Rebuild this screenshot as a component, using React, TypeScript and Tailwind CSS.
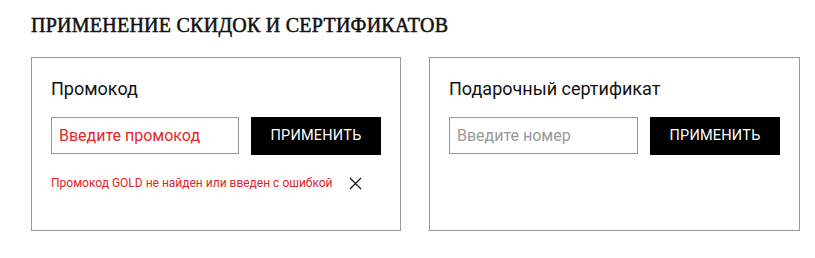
import React from "react";

export default function App() {
  return (
    <div className="w-[815px] h-[258px] bg-white pl-[31px] pt-[12px]" style={{ fontFamily: "Roboto, 'Liberation Sans', sans-serif" }}>
      <h1 className="text-[20px] leading-[26px] font-normal tracking-[0.25px] text-[#111] [-webkit-text-stroke:0.5px_#111]" style={{ fontFamily: "'Liberation Serif', 'DejaVu Serif', serif" }}>
        ПРИМЕНЕНИЕ СКИДОК И СЕРТИФИКАТОВ
      </h1>
      <div className="flex gap-[28px] mt-[19px]">
        <div className="w-[370px] h-[174px] border border-[#9a9a9a] px-[19px] pt-[19px]">
          <div className="text-[18px] leading-[24px] text-[#111]">Промокод</div>
          <div className="flex gap-[12px] mt-[16px]">
            <div className="w-[188px] h-[37px] border border-[#9a9a9a] flex items-center px-[7px]">
              <span className="text-[16px] text-[#e02a2a]">Введите промокод</span>
            </div>
            <button className="w-[130px] h-[38px] bg-black text-white text-[14.5px] font-normal tracking-[0.2px]">ПРИМЕНИТЬ</button>
          </div>
          <div className="flex items-center mt-[20px]">
            <span className="text-[12px] leading-[16px] whitespace-nowrap text-[#d9262b]">Промокод GOLD не найден или введен с ошибкой</span>
            <svg className="ml-[16px]" width="13" height="13" viewBox="0 0 13 13" fill="none" stroke="#111" strokeWidth="1.3">
              <path d="M1 1L12 12M12 1L1 12" />
            </svg>
          </div>
        </div>
        <div className="w-[371px] h-[174px] border border-[#9a9a9a] px-[19px] pt-[19px]">
          <div className="text-[18px] leading-[24px] text-[#111]">Подарочный сертификат</div>
          <div className="flex gap-[12px] mt-[16px]">
            <div className="w-[189px] h-[37px] border border-[#9a9a9a] flex items-center px-[7px]">
              <span className="text-[16px] text-[#9a9a9a]">Введите номер</span>
            </div>
            <button className="w-[130px] h-[38px] bg-black text-white text-[14.5px] font-normal tracking-[0.2px]">ПРИМЕНИТЬ</button>
          </div>
        </div>
      </div>
    </div>
  );
}
